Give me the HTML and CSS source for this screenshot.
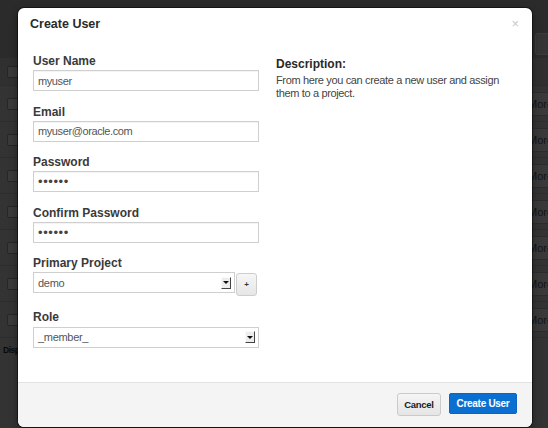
FILE: index.html
```html
<!DOCTYPE html>
<html lang="en">
<head>
<meta charset="utf-8">
<title>Create User</title>
<link rel="stylesheet" href="styles.css">
</head>
<body>
<div class="page">
  <div class="topbar"><span class="top-btn"></span></div>
  <div class="table">
    <div class="row head"><span class="cb"></span></div>
    <div class="row"><span class="cb"></span><span class="more">More</span></div>
    <div class="row"><span class="cb"></span><span class="more">More</span></div>
    <div class="row"><span class="cb"></span><span class="more">More</span></div>
    <div class="row"><span class="cb"></span><span class="more">More</span></div>
    <div class="row"><span class="cb"></span><span class="more">More</span></div>
    <div class="row"><span class="cb"></span><span class="more">More</span></div>
    <div class="row"><span class="cb"></span><span class="more">More</span></div>
  </div>
  <div class="tfoot">Displaying 7 items</div>
</div>

<div class="modal">
  <div class="modal-header">
    <h3 class="modal-title">Create User</h3>
    <span class="close">&times;</span>
  </div>
  <div class="modal-body">
    <div class="form-col">
      <div class="group">
        <label class="label">User Name</label>
        <input class="field" type="text" value="myuser">
      </div>
      <div class="group">
        <label class="label">Email</label>
        <input class="field" type="text" value="myuser@oracle.com">
      </div>
      <div class="group">
        <label class="label">Password</label>
        <input class="field pw" type="password" value="secret">
      </div>
      <div class="group">
        <label class="label">Confirm Password</label>
        <input class="field pw" type="password" value="secret">
      </div>
      <div class="group">
        <label class="label">Primary Project</label>
        <div class="select-row">
          <div class="select short"><span class="sel-value">demo</span><span class="arrow"></span></div>
          <button class="btn-add" type="button">+</button>
        </div>
      </div>
      <div class="group role">
        <label class="label">Role</label>
        <div class="select"><span class="sel-value">_member_</span><span class="arrow"></span></div>
      </div>
    </div>
    <div class="desc-col">
      <h4 class="desc-title">Description:</h4>
      <p class="desc-text">From here you can create a new user and assign them to a project.</p>
    </div>
  </div>
  <div class="modal-footer">
    <button class="btn btn-cancel" type="button">Cancel</button>
    <button class="btn btn-primary" type="button">Create User</button>
  </div>
</div>
</body>
</html>
```
FILE: styles.css
```css
html, body {
  margin: 0;
  padding: 0;
}
body {
  width: 548px;
  height: 428px;
  overflow: hidden;
  position: relative;
  background: #323232;
  font-family: "Liberation Sans", Arial, sans-serif;
}

/* background page (dimmed) */
.page {
  width: 548px;
  height: 428px;
  background: #333333;
}
.topbar {
  height: 58px;
  background: #2b2b2b;
  display: flex;
  justify-content: flex-end;
  align-items: flex-start;
  box-sizing: border-box;
  padding-top: 33px;
}
.top-btn {
  width: 12px;
  height: 20px;
  background: #353535;
  border: 1px solid #3c3c3c;
  border-right: none;
  border-radius: 3px 0 0 3px;
}
.row {
  height: 36px;
  box-sizing: border-box;
  border-bottom: 1px solid #2d2d2d;
  display: flex;
  align-items: center;
  justify-content: space-between;
  padding-left: 7px;
}
.row.head {
  height: 28px;
  background: #303030;
}
.cb {
  width: 10px;
  height: 10px;
  background: #3a3a3a;
  border: 1px solid #262626;
  border-radius: 2px;
}
.more {
  width: 24px;
  height: 24px;
  box-sizing: border-box;
  background: #393939;
  border: 1px solid #2c2c2c;
  border-right: none;
  border-radius: 3px 0 0 3px;
  font-size: 11px;
  line-height: 22px;
  color: #141414;
  padding-left: 3px;
  white-space: nowrap;
  overflow: hidden;
}
.tfoot {
  height: 24px;
  line-height: 24px;
  padding-left: 3px;
  font-size: 8.5px;
  letter-spacing: -0.5px;
  font-weight: bold;
  color: #0a0a0a;
}

/* modal */
.modal {
  position: absolute;
  left: 18px;
  top: 8px;
  width: 514px;
  height: 419px;
  background: #ffffff;
  border-radius: 6px;
  box-shadow: 0 0 0 1px rgba(0, 0, 0, 0.45), 0 3px 8px rgba(0, 0, 0, 0.4);
  display: flex;
  flex-direction: column;
  overflow: hidden;
}
.modal-header {
  padding: 8px 13px 6px 12px;
  display: flex;
  justify-content: space-between;
  align-items: flex-start;
}
.modal-title {
  margin: 0;
  font-size: 12.5px;
  line-height: 16px;
  font-weight: bold;
  color: #2a2a2a;
}
.close {
  font-size: 13px;
  line-height: 16px;
  color: #c8c8c8;
}
.modal-body {
  flex: 1;
  padding: 15px;
  display: grid;
  grid-template-columns: 1fr 1fr;
  align-items: start;
}
.group {
  margin-bottom: 12.5px;
}
.label {
  display: block;
  font-size: 12px;
  line-height: 16px;
  font-weight: bold;
  color: #3a3a3a;
  margin-bottom: 1px;
}
.field {
  display: block;
  width: 226px;
  height: 21px;
  box-sizing: border-box;
  margin: 0;
  border: 1px solid #cfcfcf;
  border-radius: 0;
  box-shadow: inset 0 1px 1px rgba(0, 0, 0, 0.05);
  padding: 0 4px;
  font-family: "Liberation Sans", Arial, sans-serif;
  font-size: 11px;
  letter-spacing: -0.4px;
  color: #555555;
  background: #fff;
  outline: none;
}
.field.pw {
  color: #444;
  letter-spacing: 0.6px;
  font-size: 13px;
}
.select-row {
  display: flex;
  align-items: flex-start;
}
.select {
  width: 226px;
  height: 21px;
  box-sizing: border-box;
  border: 1px solid #cfcfcf;
  display: flex;
  align-items: center;
  justify-content: space-between;
  padding: 0 3px 0 4px;
  background: #fff;
}
.select.short {
  width: 202px;
}
.role .select {
  margin-top: 2px;
}
.sel-value {
  font-size: 11px;
  letter-spacing: -0.3px;
  color: #555555;
}
.arrow {
  width: 10px;
  height: 12px;
  box-sizing: border-box;
  background: #ededed;
  border-top: 1px solid #fafafa;
  border-left: 1px solid #fafafa;
  border-right: 1px solid #444;
  border-bottom: 1px solid #444;
  display: flex;
  align-items: center;
  justify-content: center;
}
.arrow::after {
  content: "";
  width: 0;
  height: 0;
  border-left: 3px solid transparent;
  border-right: 3px solid transparent;
  border-top: 3px solid #111;
}
.btn-add {
  width: 21px;
  height: 23px;
  margin: 1px 0 0 1px;
  padding: 0;
  box-sizing: border-box;
  border: 1px solid #cdcdcd;
  border-radius: 3px;
  background: linear-gradient(#f6f6f6, #e6e6e6);
  font-family: "Liberation Sans", Arial, sans-serif;
  font-size: 8px;
  font-weight: bold;
  color: #333;
  line-height: 20px;
}
.desc-title {
  margin: 3px 0 0 1px;
  font-size: 12px;
  line-height: 16px;
  font-weight: bold;
  color: #2a2a2a;
}
.desc-text {
  margin: 2px 0 0 1px;
  font-size: 11px;
  line-height: 13px;
  letter-spacing: -0.35px;
  color: #444444;
}
.modal-footer {
  height: 45px;
  box-sizing: border-box;
  border-top: 1px solid #e2e2e2;
  background: #f4f4f4;
  padding: 10px 15px 0;
  display: flex;
  justify-content: flex-end;
  align-items: flex-start;
  gap: 8px;
}
.btn {
  font-family: "Liberation Sans", Arial, sans-serif;
  padding: 0;
  box-sizing: border-box;
  cursor: pointer;
}
.btn-cancel {
  width: 44px;
  height: 23px;
  border: 1px solid #cacaca;
  border-radius: 3px;
  background: linear-gradient(#f5f5f5, #e5e5e5);
  font-size: 9.5px;
  font-weight: bold;
  letter-spacing: -0.3px;
  color: #1a1a1a;
}
.btn-primary {
  width: 68px;
  height: 21px;
  border: 1px solid #0a66c2;
  border-radius: 2px;
  background: #0b6fd2;
  font-size: 10px;
  font-weight: bold;
  letter-spacing: -0.3px;
  color: #ffffff;
}
```
